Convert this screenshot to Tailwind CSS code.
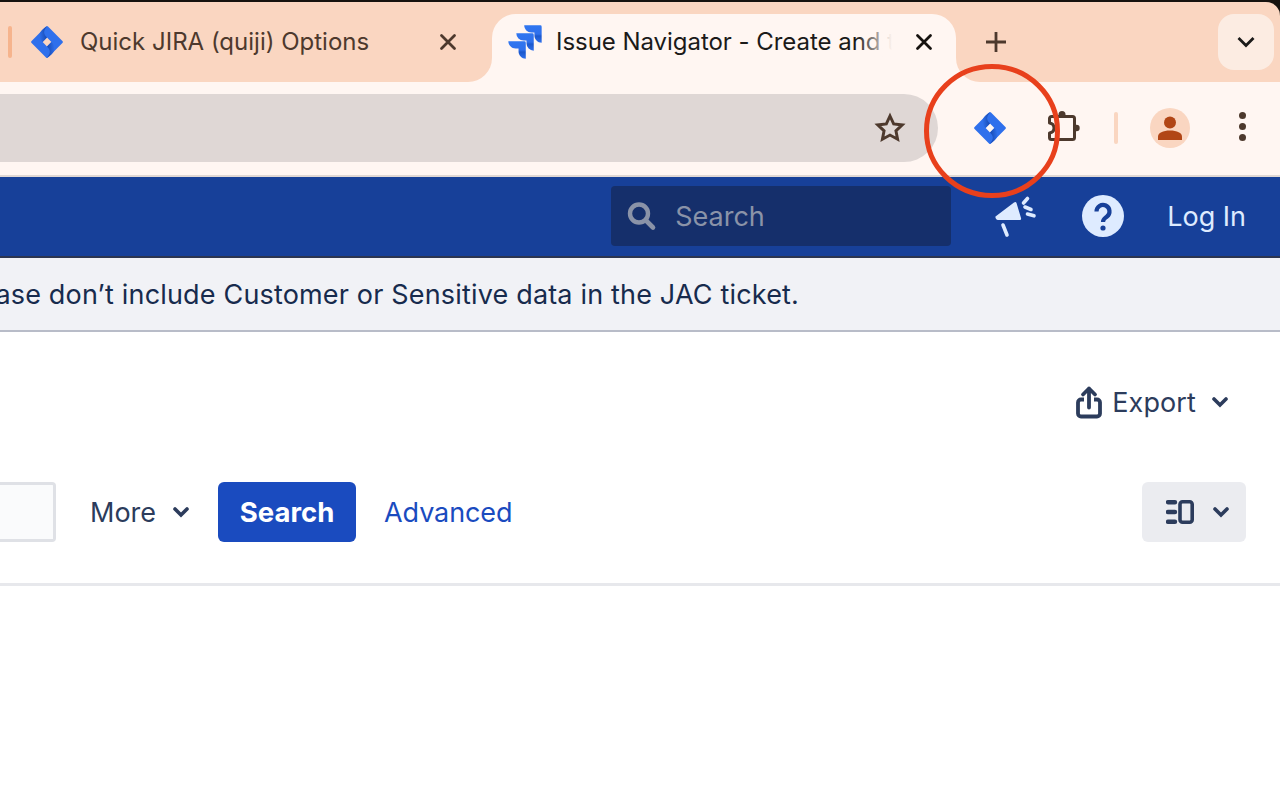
<!DOCTYPE html>
<html lang="en">
<head>
    <meta charset="UTF-8">
    <title>Issue Navigator - Create and track</title>
    <script src="https://cdn.jsdelivr.net/npm/@tailwindcss/browser@4"></script>
</head>
<body class="bg-white font-['Inter','Noto_Sans',sans-serif] overflow-hidden">
    <svg width="0" height="0" class="absolute">
        <defs>
            <linearGradient id="softwareShade" x1="0" y1="0" x2="0" y2="1">
                <stop offset="0" stop-color="#3076f0"/>
                <stop offset="0.5" stop-color="#2f70ec"/>
                <stop offset="0.62" stop-color="#1c58cc"/>
                <stop offset="1" stop-color="#2f70ec"/>
            </linearGradient>
            <linearGradient id="foldShade" x1="1" y1="0.4" x2="0" y2="0.6">
                <stop offset="0" stop-color="#1446ae"/>
                <stop offset="1" stop-color="#2f70ec"/>
            </linearGradient>
            <symbol id="diamond" viewBox="0 0 32 32">
                <path fill="#2f70ec" fill-rule="evenodd" d="M15 .6a1.400 1.400 0 0 1 2 0L31.400 15a1.400 1.400 0 0 1 0 2L17 31.400a1.400 1.400 0 0 1-2 0L.6 17a1.400 1.400 0 0 1 0-2zM16 11.600 11.600 16l4.400 4.400 4.400-4.400z"/>
                <path fill="url(#foldShade)" d="M16 .6C12 5 12.500 8.100 16 11.600L11.600 16C6.500 11 7.500 6 14 1.500z"/>
                <path fill="url(#foldShade)" transform="rotate(180 16 16)" d="M16 .6C12 5 12.500 8.100 16 11.600L11.600 16C6.500 11 7.500 6 14 1.500z"/>
            </symbol>
        </defs>
    </svg>

    <div class="bg-[#16120f] pt-[2px]">
        <!-- tab strip -->
        <div class="h-[80px] bg-[#fad6c1] rounded-tr-[14px] flex items-start text-[24px] leading-[32px]">
            <div class="relative w-[492px] h-[80px] shrink-0 flex items-start pt-[24px]">
                <div class="w-[4px] h-[32px] ml-[8px] rounded-full bg-[#f6b48d]"></div>
                <svg class="w-[32px] h-[32px] ml-[19px]"><use href="#diamond"/></svg>
                <span class="ml-[17px] text-[#4d392d] whitespace-nowrap">Quick JIRA (quiji) Options</span>
                <svg class="absolute left-[439px] top-[31px] w-[18px] h-[18px]" viewBox="0 0 18 18"><path d="M2.500 2.500l13 13M15.500 2.500l-13 13" stroke="#4d392d" stroke-width="2.800" stroke-linecap="round"/></svg>
                <div class="absolute right-0 bottom-0 w-[24px] h-[24px] bg-[#fff6f2]"><div class="w-full h-full bg-[#fad6c1] rounded-br-[24px]"></div></div>
            </div>
            <div class="relative w-[464px] h-[68px] mt-[12px] shrink-0 bg-[#fff6f2] rounded-t-[24px] flex items-start pt-[12px]">
                <svg class="w-[40px] h-[40px] ml-[13px] -mt-[4px]" viewBox="0 0 24 24"><path fill="url(#softwareShade)" d="M11.530 2c0 2.400 1.970 4.350 4.350 4.350h1.780v1.700c0 2.400 1.940 4.340 4.340 4.350V2.840a.84.840 0 0 0-.84-.84z"/><path fill="url(#softwareShade)" d="M6.770 6.800a4.360 4.360 0 0 0 4.340 4.340h1.800v1.720a4.360 4.360 0 0 0 4.340 4.340V7.630a.84.840 0 0 0-.83-.83z"/><path fill="url(#softwareShade)" d="M2 11.600c0 2.400 1.950 4.340 4.350 4.340h1.780v1.720c.01 2.390 1.950 4.340 4.340 4.340v-9.570a.84.840 0 0 0-.84-.83z"/></svg>
                <div class="relative ml-[11px] w-[336px] overflow-hidden">
                    <span class="block text-[#1b1a19] whitespace-nowrap tracking-[-0.04px]">Issue Navigator - Create and track</span>
                    <div class="absolute right-0 top-0 h-full w-[36px] bg-gradient-to-r from-transparent to-[#fff6f2]"></div>
                </div>
                <svg class="absolute left-[423px] top-[19px] w-[18px] h-[18px]" viewBox="0 0 18 18"><path d="M2.500 2.500l13 13M15.500 2.500l-13 13" stroke="#16120f" stroke-width="2.800" stroke-linecap="round"/></svg>
                <div class="absolute left-full bottom-0 w-[24px] h-[24px] bg-[#fff6f2]"><div class="w-full h-full bg-[#fad6c1] rounded-bl-[24px]"></div></div>
            </div>
            <svg class="w-[22px] h-[22px] ml-[29px] mt-[29px]" viewBox="0 0 22 22"><path d="M11 1v20M1 11h20" stroke="#4d392d" stroke-width="2.800"/></svg>
            <div class="ml-auto mr-[6px] mt-[12px] w-[56px] h-[56px] rounded-[16px] bg-[#fcece2] flex items-center justify-center">
                <svg class="w-[18px] h-[12px]" viewBox="0 0 18 12"><path d="M1.500 2l7.500 7.500L16.500 2" fill="none" stroke="#1b1a19" stroke-width="2.800"/></svg>
            </div>
        </div>

        <!-- toolbar -->
        <div class="h-[93px] bg-[#fff6f2] flex items-start pt-[12px]">
            <div class="w-[938px] h-[68px] bg-[#dfd7d5] rounded-r-[34px] flex items-center justify-end pr-[32px] shrink-0">
                <svg class="w-[32px] h-[32px]" viewBox="0 0 24 24"><path d="M12 3l2.750 5.900 6.450.8-4.750 4.400 1.250 6.300L12 17.300 6.300 20.400l1.250-6.300L2.800 9.700l6.450-.8z" fill="none" stroke="#4d392d" stroke-width="2.200" stroke-linejoin="miter"/></svg>
            </div>
            <svg class="w-[32px] h-[32px] ml-[36px] mt-[18px]"><use href="#diamond"/></svg>
            <svg class="w-[36px] h-[36px] ml-[40px] mt-[15px]" viewBox="0 0 36 36"><path d="M5.500 7.500H26.500a2 2 0 0 1 2 2V28.500a2 2 0 0 1-2 2H5.500a2 2 0 0 1-2-2V24c3.500-.5 4.500-2.500 4.500-5s-1-4.500-4.500-5V9.500a2 2 0 0 1 2-2z" fill="none" stroke="#4d392d" stroke-width="3" stroke-linejoin="round"/><circle cx="16" cy="5.500" r="3.500" fill="#4d392d"/><circle cx="30.500" cy="19" r="3.200" fill="#4d392d"/></svg>
            <div class="w-[4px] h-[32px] ml-[32px] mt-[18px] rounded-full bg-[#fad6c1]"></div>
            <div class="w-[40px] h-[40px] ml-[32px] mt-[14px] rounded-full bg-[#fad6c1] flex items-center justify-center">
                <svg class="w-[26px] h-[26px]" viewBox="0 0 26 26"><circle cx="13" cy="7.500" r="6" fill="#b14616"/><path d="M1 25v-3.500C1 18 6 15.500 13 15.500s12 2.500 12 6V25z" fill="#b14616"/></svg>
            </div>
            <div class="ml-[49px] mt-[18px] flex flex-col gap-[4.500px]">
                <div class="w-[6.500px] h-[6.500px] rounded-full bg-[#4d392d]"></div>
                <div class="w-[6.500px] h-[6.500px] rounded-full bg-[#4d392d]"></div>
                <div class="w-[6.500px] h-[6.500px] rounded-full bg-[#4d392d]"></div>
            </div>
        </div>
    </div>
    <div class="h-[2px] bg-[#e0d8d4]"></div>

    <!-- jira header -->
    <nav class="h-[79px] bg-[#174099] flex items-start justify-end pt-[9px] pr-[34px]">
        <div class="w-[340px] h-[60px] mr-[43px] rounded-[4px] bg-[#152f6b] flex items-center pl-[14px]">
            <svg class="w-[32px] h-[32px]" viewBox="0 0 32 32"><circle cx="14" cy="13.500" r="9" fill="none" stroke="#8a93a8" stroke-width="4.400"/><path d="M21 20.500l7 7" stroke="#8a93a8" stroke-width="4.600" stroke-linecap="round"/></svg>
            <span class="ml-[18px] pt-[3px] text-[27px] text-[#8a93a8]">Search</span>
        </div>
        <svg class="w-[44px] h-[44px] mr-[44px] mt-[8px]" viewBox="994 194 44 44"><path d="M995.500 216.500 1014 202.500c1.200-.9 2.100-.6 2.500.6l4.500 15c.4 1.300-.2 2-1.500 2h-21.500c-1.800 0-3-2.500-2.500-3.600z" fill="#deebff"/><path d="M1003 225l4 10" stroke="#deebff" stroke-width="3.600" stroke-linecap="round"/><path d="M1023.500 203l4-4.500M1025 207l6 2.500M1027.500 214l6.500 1.800" stroke="#deebff" stroke-width="3.600" stroke-linecap="round"/></svg>
        <svg class="w-[42px] h-[42px] mr-[43px] mt-[9px]" viewBox="0 0 42 42"><circle cx="21" cy="21" r="21" fill="#deebff"/><path d="M14.500 16.500a6.500 6.500 0 1 1 10.500 5c-2.500 2-4 2.500-4 5.500" fill="none" stroke="#174099" stroke-width="4.200"/><circle cx="21" cy="33" r="2.600" fill="#174099"/></svg>
        <span class="h-[60px] pt-[2px] flex items-center text-[27px] text-[#deebff]">Log In</span>
    </nav>
    <div class="h-[2px] bg-[#2c3550]"></div>

    <!-- banner -->
    <div class="h-[74px] bg-[#f1f2f6] border-b-2 border-[#b8bcc8] flex items-center justify-end pt-[2px] pr-[481px] overflow-hidden">
        <p class="text-[27px] text-[#172b4d] whitespace-nowrap shrink-0 tracking-[0.17px]">Please don’t include Customer or Sensitive data in the JAC ticket.</p>
    </div>

    <!-- title row -->
    <div class="h-[150px] pt-[52px] pr-[52px] flex justify-end items-start text-[#2c3c5c]">
        <div class="flex items-center h-[36px]">
            <svg class="w-[26px] h-[34px] mr-[10px]" viewBox="0 0 26 34"><path d="M8 14.500H5a3 3 0 0 0-3 3V28.500a3 3 0 0 0 3 3H21a3 3 0 0 0 3-3V17.500a3 3 0 0 0-3-3H18" fill="none" stroke="#2c3c5c" stroke-width="3.800"/><path d="M13 22.500V3.500M7 9.500 13 3.500 19 9.500" fill="none" stroke="#2c3c5c" stroke-width="3.800" stroke-linecap="round" stroke-linejoin="round"/></svg>
            <span class="pt-[2px] text-[27px] tracking-[0.1px]">Export</span>
            <svg class="w-[16px] h-[11px] ml-[16px]" viewBox="0 0 16 11"><path d="M2 2l6 6 6-6" fill="none" stroke="#2c3c5c" stroke-width="3.600" stroke-linecap="round"/></svg>
        </div>
    </div>

    <!-- filter row -->
    <div class="h-[104px] border-b-[3px] border-[#e7e8ec] flex items-start text-[27px]">
        <div class="w-[56px] h-[60px] bg-[#fafbfc] border-[3px] border-l-0 border-[#dfe1e6] rounded-r-[4px]"></div>
        <div class="ml-[34px] h-[60px] flex items-center text-[#2c3c5c]">
            <span class="pt-[2px]">More</span>
            <svg class="w-[16px] h-[11px] ml-[17px]" viewBox="0 0 16 11"><path d="M2 2l6 6 6-6" fill="none" stroke="#2c3c5c" stroke-width="3.600" stroke-linecap="round"/></svg>
        </div>
        <button class="ml-[29px] w-[138px] h-[60px] pt-[2px] bg-[#1a4bbf] rounded-[6px] text-white text-[27.500px] font-bold">Search</button>
        <a class="ml-[28px] h-[60px] pt-[2px] flex items-center text-[#1a4bbf] tracking-[-0.1px]">Advanced</a>
        <div class="ml-auto mr-[34px] w-[104px] h-[60px] rounded-[6px] bg-[#ebecf0] flex items-center pl-[24px] gap-[19px]">
            <svg class="w-[28px] h-[24px]" viewBox="0 0 28 24"><path d="M2 2.200h7M2 12h7M2 21.800h7" stroke="#2c3c5c" stroke-width="4.400" stroke-linecap="round"/><rect x="14" y="1.800" width="12.200" height="20.400" rx="2.500" fill="none" stroke="#2c3c5c" stroke-width="3.600"/></svg>
            <svg class="w-[16px] h-[11px]" viewBox="0 0 16 11"><path d="M2 2l6 6 6-6" fill="none" stroke="#2c3c5c" stroke-width="3.600" stroke-linecap="round"/></svg>
        </div>
    </div>

    <!-- annotation drawn over the screenshot -->
    <svg class="absolute left-[920px] top-[60px] w-[144px] h-[144px]" viewBox="0 0 144 144"><ellipse cx="72" cy="71" rx="65.500" ry="64.500" fill="none" stroke="#e8401c" stroke-width="5"/></svg>
</body>
</html>
